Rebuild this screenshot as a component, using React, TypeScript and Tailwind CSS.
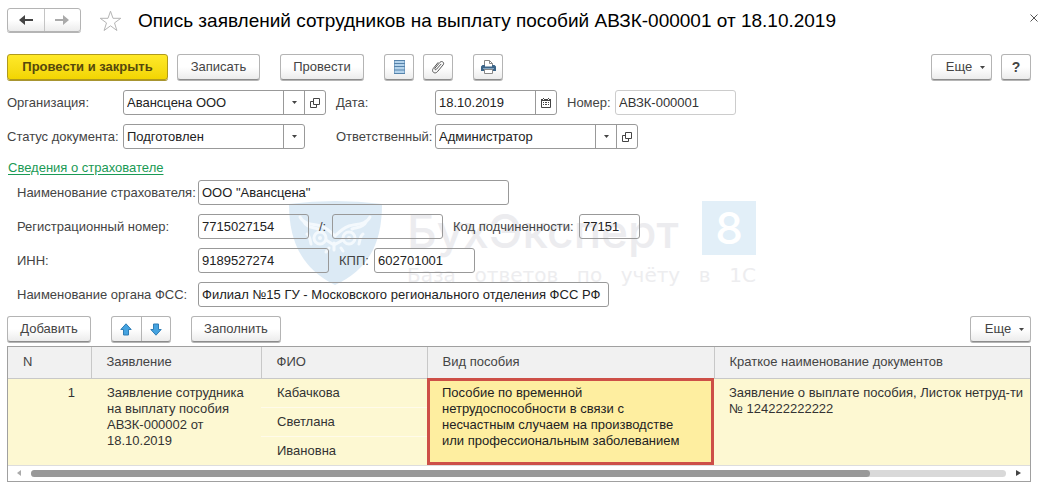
import { FC, ReactNode } from 'react';

const BUTTON = 'flex h-[26px] shrink-0 items-center justify-center rounded-[3px] border border-[#b4b4b4] border-b-[#8c8c8c] bg-linear-to-b from-white from-50% to-[#ececec] text-[#444] shadow-[0_1px_0_#b5b5b5]';
const FIELD = 'h-[25px] shrink-0 rounded-[3px] border border-[#999] px-[3px] text-[#222]';

const Caret: FC<{}> = () => (
    <svg width="5" height="3" viewBox="0 0 5 3" fill="#444" aria-hidden="true"><path d="M0 0h5L2.5 3z" /></svg>
);

const OpenIcon: FC<{}> = () => (
    <svg width="10" height="10" viewBox="0 0 10 10" fill="none" stroke="#444" aria-hidden="true">
        <path d="M3.5 .5h6v6h-6zM3.5 3.5h-3v6h6v-3" />
    </svg>
);

const CalendarIcon: FC<{}> = () => (
    <svg width="10" height="10" viewBox="0 0 10 10" aria-hidden="true">
        <path d="M.5 1.5h9v8h-9z" fill="none" stroke="#444" />
        <path d="M0 1h10v2H0zM2 0h1v1H2zM7 0h1v1H7z" fill="#444" />
        <path d="M2 4h1v1H2zM4 4h2v1H4zM7 4h1v1H7zM2 6h1v1H2zM4 6h2v1H4zM7 6h1v1H7z" fill="#444" />
        <path d="M2 1h1v1H2zM7 1h1v1H7z" fill="#fff" />
    </svg>
);

const ListIcon: FC<{}> = () => (
    <svg width="11" height="14" viewBox="0 0 11 14" aria-hidden="true">
        <path d="M.5 .5h10v13H.5z" fill="#b4d3ec" stroke="#7ba3c6" />
        <path d="M0 .5h11M0 3.5h11M0 6.5h11M0 10h11M0 13.5h11" stroke="#5583ab" />
    </svg>
);

const ClipIcon: FC<{}> = () => (
    <svg width="14" height="14" viewBox="0 0 14 14" fill="none" stroke="#555" strokeLinecap="round" aria-hidden="true">
        <path d="M10 4.2 5.4 9.3c-.9 1-2.3-.1-1.4-1.2l5-5.8c1.8-2 4.9.3 3.1 2.6l-5.7 6.8c-2.6 3-6.5-.2-4.1-3.3L7 2.6" />
    </svg>
);

const PrintIcon: FC<{}> = () => (
    <svg width="15" height="14" viewBox="0 0 15 14" aria-hidden="true">
        <path d="M3.5 6V.5h5l3 3V6" fill="#fff" stroke="#888" />
        <path d="M8.5 .5v3h3" fill="none" stroke="#888" />
        <path d="M1.5 5H4v1.5h7V5h2.5L15 6.5V11H0V6.5z" fill="#3b6488" />
        <path d="M2 8.5h11" stroke="#85a5c0" />
        <path d="M3.5 9.5h8v4h-8z" fill="#fff" stroke="#888" />
    </svg>
);

const MoveIcon: FC<{ down?: boolean }> = ({ down = false }) => (
    <svg width="12" height="13" viewBox="0 0 12 13" className={ down ? 'rotate-180' : '' } aria-hidden="true">
        <path d="M6 .8 11.2 6.5H8.5v5.5h-5V6.5H.8z" fill="#45a3e0" stroke="#2f7db5" strokeLinejoin="round" />
    </svg>
);

const ArrowIcon: FC<{ right?: boolean }> = ({ right = false }) => (
    <svg width="14" height="10" viewBox="0 0 14 10" className={ right ? 'rotate-180 fill-[#aaa]' : 'fill-[#444]' } aria-hidden="true">
        <path d="M0 5 6 0v4h8v2H6v4z" />
    </svg>
);

const Label: FC<{ htmlFor: string, className?: string, children: ReactNode }> = ({ htmlFor, className = '', children }) => (
    <label htmlFor={ htmlFor } className={ `shrink-0 whitespace-nowrap text-[#444] ${ className }` }>{ children }</label>
);

const Combo: FC<{ id: string, value: string, open?: boolean }> = ({ id, value, open = false }) => (
    <div className="flex h-[25px] shrink-0 rounded-[3px] border border-[#999]">
        <div className="relative w-[180px]">
            <select id={ id } className="h-full w-full appearance-none pl-[3px] pr-6 text-[#222]">
                <option>{ value }</option>
            </select>
            <span className="pointer-events-none absolute inset-y-0 right-0 flex w-[21px] items-center justify-center border-l border-[#999]"><Caret /></span>
        </div>
        { open &&
            <button type="button" aria-label="Открыть" className="flex w-[21px] items-center justify-center border-l border-[#999]"><OpenIcon /></button> }
    </div>
);

const MoreButton: FC<{}> = () => (
    <button type="button" className={ `${ BUTTON } w-[61px] gap-2 pl-2` }>Еще <Caret /></button>
);

const Watermark: FC<{}> = () => (
    <div aria-hidden="true" className="pointer-events-none absolute left-[282px] top-[41px] -z-10 flex select-none">
        <svg width="94" height="84" viewBox="0 0 94 84">
            <path d="M0 3Q46-3 93 3C93 42 80 68 46 84C14 68 0 42 0 3z" fill="#dceaf5" />
            <g fill="none" stroke="#f4f9fd" strokeWidth="3" strokeLinecap="round" strokeLinejoin="round">
                <path d="M11 16c4 8 14 7 21 9 6 2 9 5 14 10 5-5 8-8 14-10 7-2 17-1 21-9" />
                <path d="M15 21c3 6 9 5 14 7M77 21c-3 6-9 5-14 7" />
                <circle cx="31" cy="37" r="6" />
                <circle cx="60" cy="37" r="6" />
                <path d="M37 39l8 5 9-5M45 42v7M18 33c3 2 3 6 4 10M74 33c-3 2-3 6-4 10M40 47l-3 4M52 47l2 3" />
            </g>
            <g fill="#f4f9fd">
                <circle cx="31" cy="37" r="2" />
                <circle cx="60" cy="37" r="2" />
            </g>
        </svg>
        <div className="ml-6 w-[349px]">
            <div className="flex items-start justify-between">
                <span className="font-['Inter'] text-[46px] font-medium leading-[60px] text-[#ececef]">БухЭксперт</span>
                <span className="flex size-[54px] items-center justify-center bg-[#e2eff8] font-['Inter'] text-[44px] font-medium leading-none text-white">8</span>
            </div>
            <div className="flex justify-between font-['DejaVu_Sans'] text-xl text-[#ededef]">
                { [ 'База', 'ответов', 'по', 'учёту', 'в', '1С' ].map(word => <span key={ word }>{ word }</span>) }
            </div>
        </div>
    </div>
);

const COLUMNS = [ 'N', 'Заявление', 'ФИО', 'Вид пособия', 'Краткое наименование документов' ];

const StatementsTable: FC<{}> = () => (
    <div className="border border-[#a0a0a0]">
        <table className="w-full table-fixed border-collapse text-left leading-4">
            <colgroup>
                <col className="w-[83px]" />
                <col className="w-[170px]" />
                <col className="w-[166px]" />
                <col className="w-[287px]" />
                <col />
            </colgroup>
            <thead>
                <tr className="h-[31px] bg-[#f1f1f1] text-[#444]">
                    { COLUMNS.map(column => (
                        <th key={ column } className="border-r border-b border-[#c8c8c8] px-[15px] font-normal last:border-r-0">{ column }</th>
                    )) }
                </tr>
            </thead>
            <tbody>
                <tr className="border-b border-[#ddd] bg-[#fdf8d2] align-top text-[#333]">
                    <td className="px-4 py-[6px] text-right">1</td>
                    <td className="px-4 py-[6px]">Заявление сотрудника на выплату пособия АВЗК-000002 от 18.10.2019</td>
                    <td className="divide-y divide-[#fffbea]">
                        { [ 'Кабачкова', 'Светлана', 'Ивановна' ].map(name => (
                            <div key={ name } className="flex h-[29px] items-center px-4 last:h-7">{ name }</div>
                        )) }
                    </td>
                    <td className="bg-[#feeea0] py-[6px] pl-[15px] pr-6 text-[#222] outline-3 -outline-offset-3 outline-[#cd4f47]">
                        Пособие по временной нетрудоспособности в связи с несчастным случаем на производстве или профессиональным заболеванием
                    </td>
                    <td className="py-[6px] pl-[15px]">Заявление о выплате пособия, Листок нетруд-ти № 124222222222</td>
                </tr>
            </tbody>
        </table>
        <div className="flex h-[15px] items-center gap-[10px] px-[9px]">
            <svg width="4" height="6" viewBox="0 0 4 6" fill="#aaa" aria-hidden="true"><path d="M4 0v6L0 3z" /></svg>
            <div className="h-[7px] flex-1 rounded-full bg-[#d9d9d9]">
                <div className="h-full w-[86%] rounded-full bg-[#999]" />
            </div>
            <svg width="5" height="6" viewBox="0 0 5 6" fill="#444" aria-hidden="true"><path d="M0 0v6l5-3z" /></svg>
        </div>
    </div>
);

export default function App()
{
    return (
        <main className="min-h-screen bg-white px-[7px] pt-2 font-['Liberation_Sans',Arial,sans-serif] text-[13px]">
            <header className="flex items-start">
                <div className="flex h-6 w-[74px] divide-x divide-[#c4c4c4] rounded-[3px] border border-[#b4b4b4] bg-linear-to-b from-white from-50% to-[#ececec] shadow-[0_1px_0_#b5b5b5]">
                    <button type="button" aria-label="Назад" className="flex flex-1 items-center justify-center"><ArrowIcon /></button>
                    <button type="button" aria-label="Вперед" className="flex flex-1 items-center justify-center"><ArrowIcon right /></button>
                </div>
                <button type="button" aria-label="В избранное" className="ml-[18px] mt-[2px]">
                    <svg width="23" height="22" viewBox="0 0 23 22" fill="none" stroke="#b5b5b5"><path d="M11.5 1.2 14 8.3h7.8l-6.3 4.6 2.4 7.6-6.4-4.7-6.4 4.7 2.4-7.6L1.2 8.3H9z" /></svg>
                </button>
                <h1 className="ml-4 text-[19px] leading-[26px] text-black">Опись заявлений сотрудников на выплату пособий АВЗК-000001 от 18.10.2019</h1>
                <button type="button" aria-label="Закрыть" className="ml-auto mt-[6px]">
                    <svg width="8" height="8" viewBox="0 0 8 8" stroke="#555" fill="none"><path d="M.5 .5l7 7M7.5 .5l-7 7" /></svg>
                </button>
            </header>

            <div className="mr-[7px] mt-5 flex">
                <button type="button" className="flex h-[26px] w-[161px] items-center justify-center rounded-[3px] border border-[#b09a1c] bg-linear-to-b from-[#ffe928] to-[#f2d500] font-bold text-[#55480c] shadow-[0_1px_0_#a89530]">Провести и закрыть</button>
                <button type="button" className={ `${ BUTTON } ml-[9px] w-[83px]` }>Записать</button>
                <button type="button" className={ `${ BUTTON } ml-5 w-[84px]` }>Провести</button>
                <button type="button" aria-label="Список" className={ `${ BUTTON } ml-5 w-[30px]` }><ListIcon /></button>
                <button type="button" aria-label="Файлы" className={ `${ BUTTON } ml-[9px] w-[30px]` }><ClipIcon /></button>
                <button type="button" aria-label="Печать" className={ `${ BUTTON } ml-5 w-[30px]` }><PrintIcon /></button>
                <div className="ml-auto flex gap-[9px]">
                    <MoreButton />
                    <button type="button" aria-label="Справка" className={ `${ BUTTON } w-[30px] text-sm font-bold` }>?</button>
                </div>
            </div>

            <div className="mt-[10px] flex flex-col gap-[9px]">
                <div className="flex items-center">
                    <Label htmlFor="org" className="w-[116px]">Организация:</Label>
                    <Combo id="org" value="Авансцена ООО" open />
                    <Label htmlFor="date" className="ml-[10px] w-[99px]">Дата:</Label>
                    <div className="flex h-[25px] w-[122px] rounded-[3px] border border-[#999]">
                        <input id="date" defaultValue="18.10.2019" className="min-w-0 flex-1 pl-[3px] text-[#222]" />
                        <button type="button" aria-label="Выбрать дату" className="flex w-[21px] items-center justify-center border-l border-[#999]"><CalendarIcon /></button>
                    </div>
                    <Label htmlFor="number" className="ml-[10px] w-[48px]">Номер:</Label>
                    <input id="number" defaultValue="АВЗК-000001" className="h-[25px] w-[121px] rounded-[3px] border border-[#ccc] px-[3px] text-[#333]" />
                </div>
                <div className="flex items-center">
                    <Label htmlFor="status" className="w-[116px]">Статус документа:</Label>
                    <Combo id="status" value="Подготовлен" />
                    <Label htmlFor="responsible" className="ml-[31px] w-[99px]">Ответственный:</Label>
                    <Combo id="responsible" value="Администратор" open />
                </div>
            </div>

            <section className="relative isolate mt-[11px]">
                <Watermark />
                <a href="#insurer" className="ml-px block w-fit leading-4 text-[#1a9a55] underline underline-offset-2">Сведения о страхователе</a>
                <div id="insurer" className="ml-[10px] mt-1 flex flex-col gap-[9px]">
                    <div className="flex items-center">
                        <Label htmlFor="insurer-name" className="w-[181px]">Наименование страхователя:</Label>
                        <input id="insurer-name" defaultValue={ 'ООО "Авансцена"' } className={ `${ FIELD } w-[311px]` } />
                    </div>
                    <div className="flex items-center">
                        <Label htmlFor="reg-number" className="w-[181px]">Регистрационный номер:</Label>
                        <input id="reg-number" defaultValue="7715027154" className={ `${ FIELD } w-[111px]` } />
                        <Label htmlFor="reg-extra" className="ml-[10px] w-[13px]">/:</Label>
                        <input id="reg-extra" className={ `${ FIELD } w-[111px]` } />
                        <Label htmlFor="sub-code" className="ml-[10px] w-[126px]">Код подчиненности:</Label>
                        <input id="sub-code" defaultValue="77151" className={ `${ FIELD } w-[61px]` } />
                    </div>
                    <div className="flex items-center">
                        <Label htmlFor="inn" className="w-[181px]">ИНН:</Label>
                        <input id="inn" defaultValue="9189527274" className={ `${ FIELD } w-[131px]` } />
                        <Label htmlFor="kpp" className="ml-[10px] w-[35px]">КПП:</Label>
                        <input id="kpp" defaultValue="602701001" className={ `${ FIELD } w-[101px]` } />
                    </div>
                    <div className="flex items-center">
                        <Label htmlFor="fss" className="w-[181px]">Наименование органа ФСС:</Label>
                        <input id="fss" defaultValue="Филиал №15 ГУ - Московского регионального отделения ФСС РФ" className={ `${ FIELD } w-[411px]` } />
                    </div>
                </div>
            </section>

            <section className="mr-[7px] mt-[9px]">
                <div className="mb-1 flex">
                    <button type="button" className={ `${ BUTTON } w-[84px]` }>Добавить</button>
                    <div className="ml-5 flex h-[26px] w-[60px] divide-x divide-[#b4b4b4] rounded-[3px] border border-[#b4b4b4] border-b-[#8c8c8c] bg-linear-to-b from-white from-50% to-[#ececec] shadow-[0_1px_0_#b5b5b5]">
                        <button type="button" aria-label="Вверх" className="flex flex-1 items-center justify-center"><MoveIcon /></button>
                        <button type="button" aria-label="Вниз" className="flex flex-1 items-center justify-center"><MoveIcon down /></button>
                    </div>
                    <button type="button" className={ `${ BUTTON } ml-5 w-[90px]` }>Заполнить</button>
                    <div className="ml-auto"><MoreButton /></div>
                </div>
                <StatementsTable />
            </section>
        </main>
    );
}
